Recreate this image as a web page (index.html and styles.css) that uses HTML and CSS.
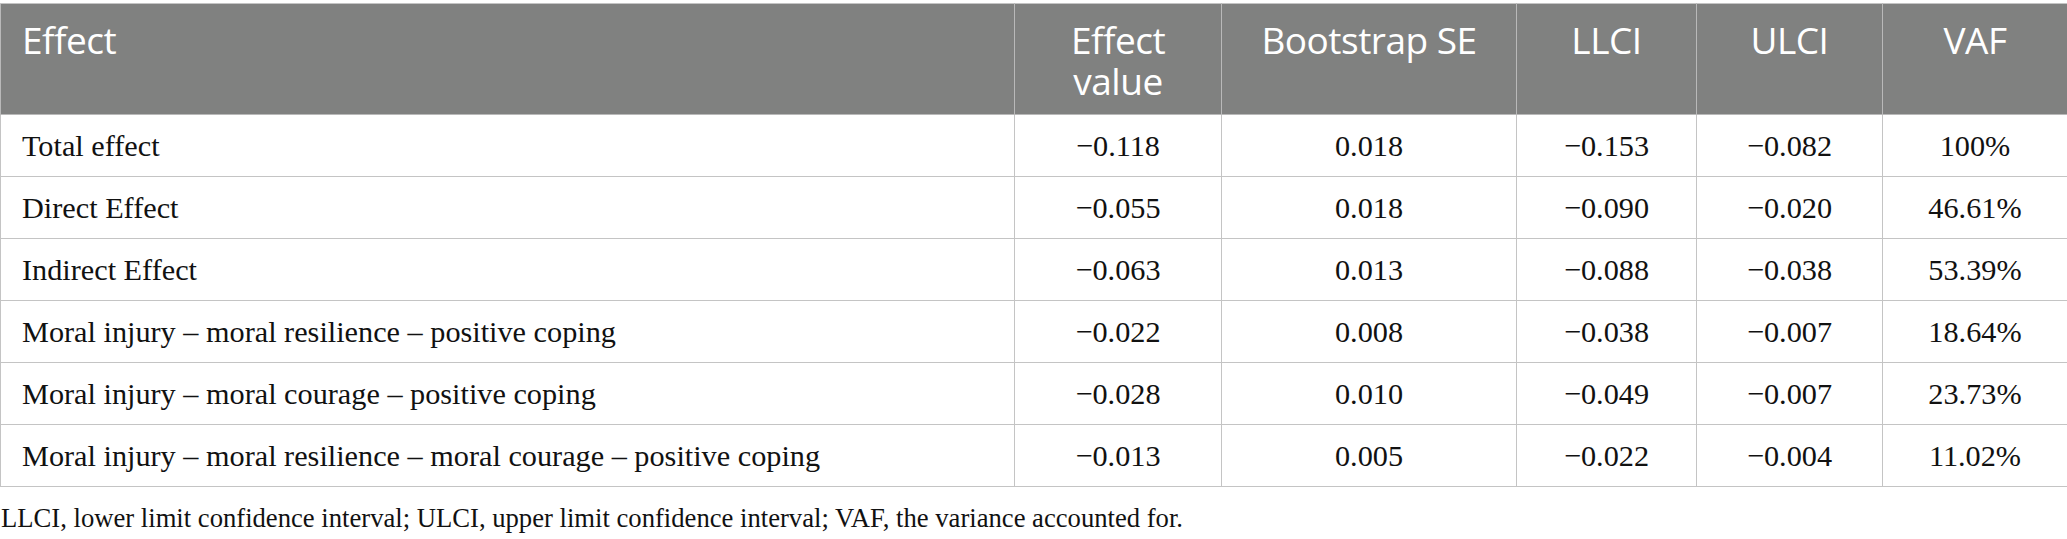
FILE: index.html
```html
<!DOCTYPE html>
<html lang="en">
<head>
<meta charset="utf-8">
<title>Mediation effects</title>
<link rel="stylesheet" href="styles.css">
</head>
<body>
<div class="wrap">
<table class="tbl">
<colgroup>
<col class="c1"><col class="c2"><col class="c3"><col class="c4"><col class="c5"><col class="c6">
</colgroup>
<thead>
<tr>
<th class="first">Effect</th>
<th>Effect<br>value</th>
<th>Bootstrap SE</th>
<th>LLCI</th>
<th>ULCI</th>
<th>VAF</th>
</tr>
</thead>
<tbody>
<tr><td class="first">Total effect</td><td>−0.118</td><td>0.018</td><td>−0.153</td><td>−0.082</td><td>100%</td></tr>
<tr><td class="first">Direct Effect</td><td>−0.055</td><td>0.018</td><td>−0.090</td><td>−0.020</td><td>46.61%</td></tr>
<tr><td class="first">Indirect Effect</td><td>−0.063</td><td>0.013</td><td>−0.088</td><td>−0.038</td><td>53.39%</td></tr>
<tr><td class="first">Moral injury – moral resilience – positive coping</td><td>−0.022</td><td>0.008</td><td>−0.038</td><td>−0.007</td><td>18.64%</td></tr>
<tr><td class="first">Moral injury – moral courage – positive coping</td><td>−0.028</td><td>0.010</td><td>−0.049</td><td>−0.007</td><td>23.73%</td></tr>
<tr><td class="first">Moral injury – moral resilience – moral courage – positive coping</td><td>−0.013</td><td>0.005</td><td>−0.022</td><td>−0.004</td><td>11.02%</td></tr>
</tbody>
</table>
<p class="note">LLCI, lower limit confidence interval; ULCI, upper limit confidence interval; VAF, the variance accounted for.</p>
</div>
</body>
</html>
```
FILE: styles.css
```css
html, body {
  margin: 0;
  padding: 0;
  background: #ffffff;
}
.wrap {
  padding-top: 3px;
  width: 2067px;
}
.tbl {
  width: 2067px;
  border-collapse: collapse;
  table-layout: fixed;
}
.c1 { width: 1014px; }
.c2 { width: 207px; }
.c3 { width: 295px; }
.c4 { width: 180px; }
.c5 { width: 186px; }
.c6 { width: 185px; }
.tbl th {
  background: #808180;
  color: #ffffff;
  font-family: "Open Sans", "Noto Sans", sans-serif;
  font-weight: 400;
  font-size: 37px;
  line-height: 41px;
  letter-spacing: -0.5px;
  text-align: center;
  vertical-align: top;
  height: 111px;
  box-sizing: border-box;
  padding: 15px 6px 0 6px;
  border: 1px solid #b9b9b9;
  border-top: 1px solid #c4c4c4;
}
.tbl th.first {
  text-align: left;
  padding-left: 21px;
}
.tbl td {
  font-family: "Liberation Serif", "Times New Roman", serif;
  font-size: 30.25px;
  color: #111111;
  text-align: center;
  vertical-align: middle;
  height: 62px;
  box-sizing: border-box;
  padding: 1px 6px 0 6px;
  border: 1px solid #c4c4c4;
}
.tbl td.first {
  text-align: left;
  padding-left: 21px;
}
.note {
  margin: 16px 0 0 0;
  padding-left: 1px;
  font-family: "Liberation Serif", "Times New Roman", serif;
  font-size: 26.65px;
  line-height: 30px;
  color: #111111;
}
```
